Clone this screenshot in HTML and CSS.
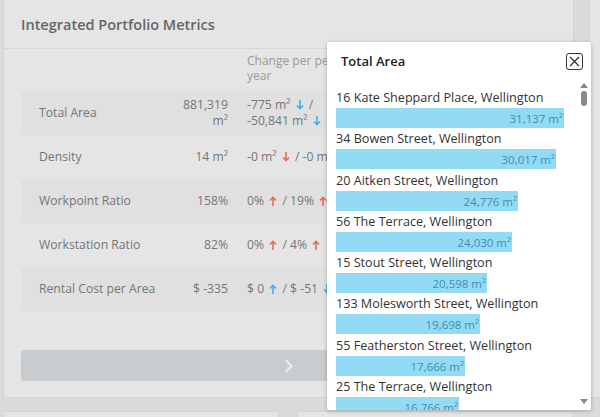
FILE: index.html
```html
<!DOCTYPE html>
<html>
<head>
<title>Integrated Portfolio Metrics</title>
<link rel="stylesheet" href="styles.css">
</head>
<body>
	<div class="board">
		<div class="top_row">
			<div class="card">
				<div class="card_head">Integrated Portfolio Metrics</div>
				<div class="metrics">
					<div class="head_cell"></div>
					<div class="head_cell"></div>
					<div class="head_cell change"><span>Change per period<br />year</span></div>

					<div class="cell label odd"><span>Total Area</span></div>
					<div class="cell value odd"><span>881,319<br />m²</span></div>
					<div class="cell change odd"><span>-775 m² <svg class="arr down" viewBox="0 0 8 10"><path d="M4 0 V8.5 M1 5.5 L4 8.7 L7 5.5"/></svg> /<br />-50,841 m² <svg class="arr down" viewBox="0 0 8 10"><path d="M4 0 V8.5 M1 5.5 L4 8.7 L7 5.5"/></svg></span></div>

					<div class="cell label"><span>Density</span></div>
					<div class="cell value"><span>14 m²</span></div>
					<div class="cell change"><span>-0 m² <svg class="arr up" viewBox="0 0 8 10"><path d="M4 0 V8.5 M1 5.5 L4 8.7 L7 5.5"/></svg> / -0 m² <svg class="arr up" viewBox="0 0 8 10"><path d="M4 0 V8.5 M1 5.5 L4 8.7 L7 5.5"/></svg></span></div>

					<div class="cell label odd"><span>Workpoint Ratio</span></div>
					<div class="cell value odd"><span>158%</span></div>
					<div class="cell change odd"><span>0% <svg class="arr up" viewBox="0 0 8 10"><path d="M4 10 V1.5 M1 4.5 L4 1.3 L7 4.5"/></svg> / 19% <svg class="arr up" viewBox="0 0 8 10"><path d="M4 10 V1.5 M1 4.5 L4 1.3 L7 4.5"/></svg></span></div>

					<div class="cell label"><span>Workstation Ratio</span></div>
					<div class="cell value"><span>82%</span></div>
					<div class="cell change"><span>0% <svg class="arr up" viewBox="0 0 8 10"><path d="M4 10 V1.5 M1 4.5 L4 1.3 L7 4.5"/></svg> / 4% <svg class="arr up" viewBox="0 0 8 10"><path d="M4 10 V1.5 M1 4.5 L4 1.3 L7 4.5"/></svg></span></div>

					<div class="cell label odd"><span>Rental Cost per Area</span></div>
					<div class="cell value odd"><span>$ -335</span></div>
					<div class="cell change odd"><span>$ 0 <svg class="arr down" viewBox="0 0 8 10"><path d="M4 10 V1.5 M1 4.5 L4 1.3 L7 4.5"/></svg> / $ -51 <svg class="arr down" viewBox="0 0 8 10"><path d="M4 0 V8.5 M1 5.5 L4 8.7 L7 5.5"/></svg></span></div>
				</div>
				<div class="more_btn">
					<svg width="10" height="14" viewBox="0 0 10 14"><path d="M2 1.5 L7.5 7 L2 12.5" fill="none" stroke="#eef0f1" stroke-width="2"/></svg>
				</div>
			</div>
			<div class="card side"></div>
		</div>
		<div class="bottom_row">
			<div class="card small"></div>
			<div class="card small"></div>
		</div>
	</div>

	<div class="popup">
		<div class="popup_head">
			<span class="popup_title">Total Area</span>
			<span class="close_btn">
				<svg width="11" height="11" viewBox="0 0 11 11"><path d="M1 1 L10 10 M10 1 L1 10" stroke="#333" stroke-width="1.3"/></svg>
			</span>
		</div>
		<div class="popup_body">
			<div class="area_list">
				<div class="area_name">16 Kate Sheppard Place, Wellington</div>
				<div class="area_bar" style="width:228px">31,137 m²</div>
				<div class="area_name">34 Bowen Street, Wellington</div>
				<div class="area_bar" style="width:220px">30,017 m²</div>
				<div class="area_name">20 Aitken Street, Wellington</div>
				<div class="area_bar" style="width:182px">24,776 m²</div>
				<div class="area_name">56 The Terrace, Wellington</div>
				<div class="area_bar" style="width:176px">24,030 m²</div>
				<div class="area_name">15 Stout Street, Wellington</div>
				<div class="area_bar" style="width:151px">20,598 m²</div>
				<div class="area_name">133 Molesworth Street, Wellington</div>
				<div class="area_bar" style="width:144px">19,698 m²</div>
				<div class="area_name">55 Featherston Street, Wellington</div>
				<div class="area_bar" style="width:129px">17,666 m²</div>
				<div class="area_name">25 The Terrace, Wellington</div>
				<div class="area_bar" style="width:123px">16,766 m²</div>
			</div>
			<div class="scroll_bar">
				<span class="arrow_up"></span>
				<span class="thumb"></span>
				<span class="track"></span>
				<span class="arrow_down"></span>
			</div>
		</div>
	</div>
</body>
</html>
```

FILE: styles.css
```css
body {
	margin: 0;
	padding: 0;
	background: #dadcdb;
	font-family: "Open Sans", "Noto Sans", sans-serif;
	overflow: hidden;
}

.board {
	padding-left: 3px;
	height: 417px;
	overflow: hidden;
}

.top_row {
	display: flex;
	gap: 15px;
}

.card {
	background: #e5e5e5;
	border: 1px solid #d3d5d4;
	border-top: none;
	border-radius: 0 0 2px 2px;
}

.top_row .card {
	width: 569px;
	height: 397px;
	flex-shrink: 0;
}

.top_row .side {
	width: 11px;
	border-right: none;
}

.bottom_row {
	display: flex;
	gap: 18px;
	margin-top: 13px;
}

.bottom_row .small {
	width: 274px;
	height: 5px;
	border-top: 1px solid #d3d5d4;
	border-bottom: none;
	border-radius: 2px 2px 0 0;
}

.card_head {
	height: 48px;
	line-height: 50px;
	padding-left: 17px;
	font-size: 14.5px;
	font-weight: 600;
	color: #666;
	border-bottom: 1px solid #d6d6d6;
}

.metrics {
	display: grid;
	grid-template-columns: 150px 65px 1fr;
	margin: 0 16px 0 17px;
}

.head_cell {
	height: 42px;
	box-sizing: border-box;
	padding-top: 4px;
}

.head_cell.change {
	font-size: 12px;
	line-height: 15px;
	color: #9a9a9a;
}

.cell {
	height: 44px;
	display: flex;
	align-items: center;
	font-size: 12.2px;
	line-height: 16px;
	color: #767676;
}

.cell.odd {
	background: #e0e0e0;
}

.cell.label {
	padding-left: 18px;
}

.cell.value {
	justify-content: flex-end;
	text-align: right;
	padding-right: 8px;
}

.cell.change, .head_cell.change {
	padding-left: 11px;
	white-space: nowrap;
}

.arr {
	width: 8px;
	height: 10px;
	margin: 0 2px;
	vertical-align: -1px;
	fill: none;
	stroke-width: 1.6;
}

.arr.down {
	stroke: #3fb0e6;
}

.arr.up {
	stroke: #ea6a50;
}

.more_btn {
	margin: 39px 16px 0 17px;
	height: 31px;
	background: #c9cccf;
	border-radius: 3px;
	display: flex;
	align-items: center;
	justify-content: center;
}

.popup {
	position: absolute;
	left: 327px;
	top: 42px;
	width: 264px;
	height: 368px;
	background: #fff;
	border-radius: 2px;
	box-shadow: 0 1px 4px rgba(0, 0, 0, 0.25);
	display: flex;
	flex-direction: column;
}

.popup_head {
	height: 45px;
	flex-shrink: 0;
	display: flex;
	align-items: center;
	justify-content: space-between;
	padding: 0 8px 0 14px;
}

.popup_title {
	font-size: 13px;
	font-weight: 600;
	color: #222;
	margin-top: -7px;
}

.close_btn {
	width: 15px;
	height: 15px;
	border: 1.5px solid #333;
	border-radius: 3px;
	display: flex;
	align-items: center;
	justify-content: center;
	margin-top: -7px;
}

.popup_body {
	flex: 1;
	display: flex;
	min-height: 0;
}

.area_list {
	flex: 1;
	overflow: hidden;
	padding-left: 9px;
}

.area_name {
	height: 21px;
	line-height: 21px;
	font-size: 12.6px;
	color: #333;
	white-space: nowrap;
}

.area_bar {
	height: 20px;
	line-height: 21px;
	background: #93dbf5;
	color: #3d8db2;
	font-size: 11.5px;
	text-align: right;
	padding-right: 1px;
	box-sizing: border-box;
	margin-bottom: 0.3px;
	white-space: nowrap;
}

.scroll_bar {
	width: 18px;
	display: flex;
	flex-direction: column;
	align-items: center;
	padding: 0 0 6px 0;
}

.arrow_up {
	width: 0;
	height: 0;
	border-left: 4px solid transparent;
	border-right: 4px solid transparent;
	border-bottom: 5px solid #888;
	margin-top: -4px;
	margin-left: 3px;
}

.thumb {
	width: 6px;
	height: 15px;
	border-radius: 3px;
	background: #8a8a8a;
	margin-top: 3px;
	margin-left: 3px;
}

.track {
	flex: 1;
}

.arrow_down {
	width: 0;
	height: 0;
	border-left: 4px solid transparent;
	border-right: 4px solid transparent;
	border-top: 5px solid #888;
	margin-left: 3px;
}
```
